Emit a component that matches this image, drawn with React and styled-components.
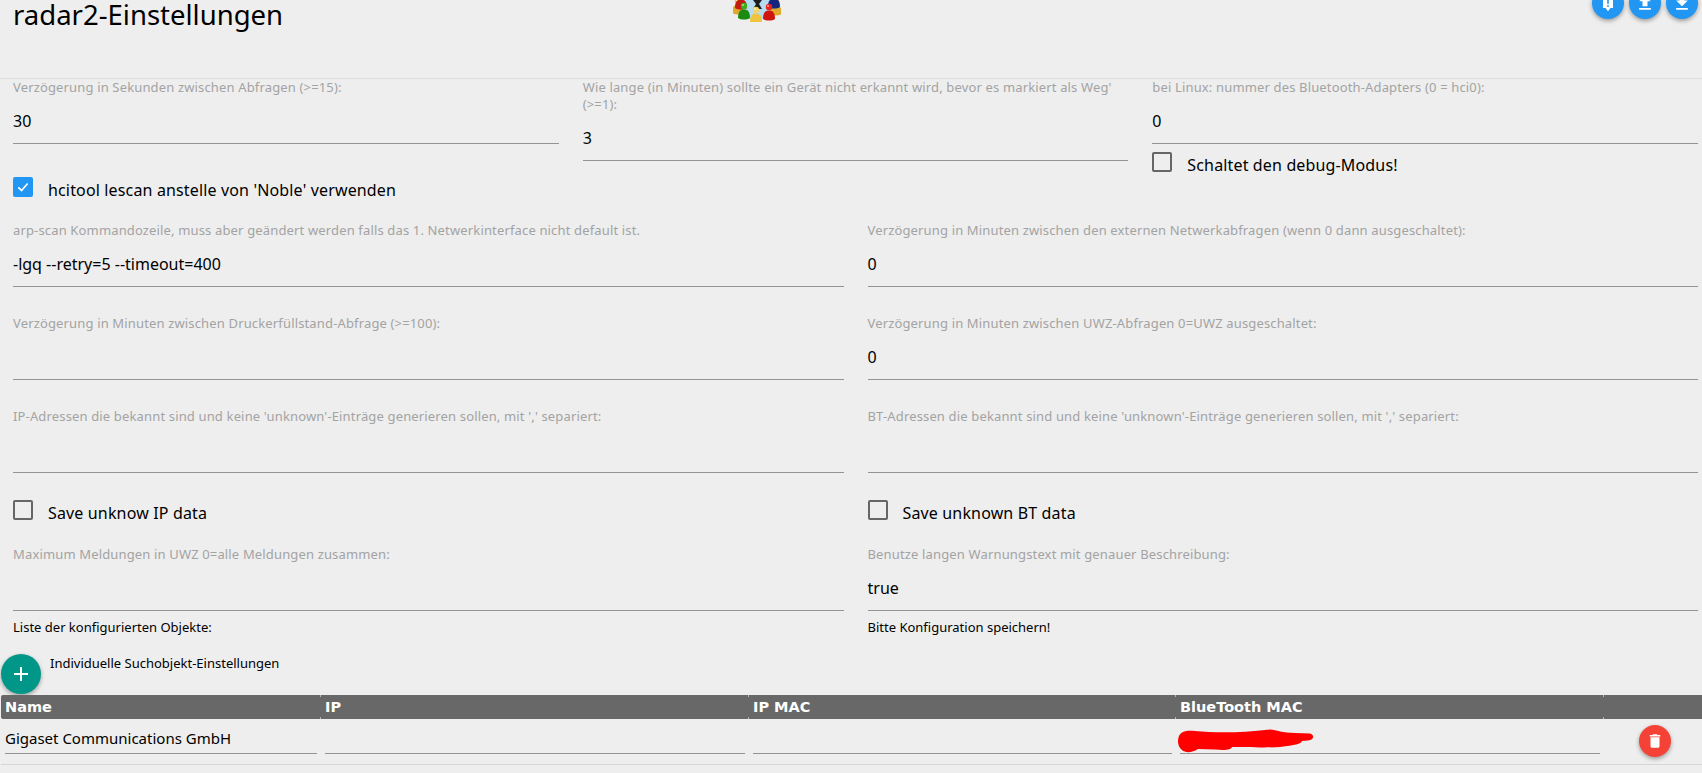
import React from "react";
import styled, { createGlobalStyle } from "styled-components";

const GlobalStyle = createGlobalStyle`
  html, body {
    margin: 0;
    padding: 0;
    height: 773px;
    overflow: hidden;
    background: #eeeeee;
  }
  * {
    box-sizing: border-box;
  }
  body {
    font-family: "Noto Sans", "Open Sans", sans-serif;
    color: #000;
  }
`;

const Header = styled.header`
  display: flex;
  height: 79px;
  padding: 0 4px 0 13px;
  border-bottom: 1px solid #dddddd;
`;

const Title = styled.h1`
  flex: 0 0 720px;
  margin: 0;
  font-size: 27.5px;
  font-weight: 400;
  line-height: 30px;
`;

const Logo = styled.svg`
  display: block;
  width: 48px;
  height: 22px;
`;

const HeadActions = styled.div`
  display: flex;
  gap: 5px;
  margin-left: auto;
  margin-top: -13px;
  align-self: flex-start;
`;

const Fab = styled.button`
  display: flex;
  align-items: center;
  justify-content: center;
  flex: none;
  width: ${(p) => p.$size || 32}px;
  height: ${(p) => p.$size || 32}px;
  padding: 0;
  border: 0;
  border-radius: 50%;
  color: #fff;
  background: ${(p) => p.$bg || "#2196f3"};
  box-shadow: 0 2px 4px rgba(0, 0, 0, 0.35);
`;

const Body = styled.main`
  padding: 0 4px 0 13px;
`;

const Row = styled.div`
  display: grid;
  grid-template-columns: repeat(${(p) => p.$cols || 2}, 1fr);
  column-gap: 24px;
  margin-top: ${(p) => p.$mt || 0}px;
  margin-bottom: ${(p) => p.$mb || 0}px;
`;

const Label = styled.label`
  display: block;
  font-size: 13px;
  letter-spacing: 0.15px;
  line-height: 17px;
  color: #a3a3a3;
`;

const Input = styled.div`
  display: flex;
  align-items: center;
  height: 48px;
  padding-top: 2px;
  font-size: 16px;
  border-bottom: 1px solid #949494;
`;

const Check = styled.div`
  display: flex;
  height: 20px;
  margin-top: ${(p) => p.$mt || 0}px;
  font-size: 16px;
  letter-spacing: 0.15px;
`;

const Box = styled.span`
  display: flex;
  align-items: center;
  justify-content: center;
  flex: none;
  width: 20px;
  height: 20px;
  margin-right: 15px;
  border: 2px solid #666666;
  border-radius: 2px;
  background: ${(p) => (p.$on ? "#2196f3" : "transparent")};
  border-color: ${(p) => (p.$on ? "#2196f3" : "#666666")};
`;

const CheckText = styled.span`
  line-height: 20px;
  margin-top: 3px;
`;

const Note = styled.div`
  font-size: 13px;
  line-height: 17px;
`;

const AddRow = styled.div`
  display: flex;
  padding-left: 1px;
  height: 40px;
`;

const AddText = styled.div`
  margin: 1px 0 0 9px;
  font-size: 13px;
  line-height: 17px;
`;

const Table = styled.div`
  margin: 1px 0 0 1px;
  border-bottom: 1px solid #d6d6d6;
`;

const GridRow = styled.div`
  display: grid;
  grid-template-columns: 320px 428px 427px 428px 98px;
`;

const HeadCell = styled.div`
  height: 24px;
  padding-left: 4px;
  font-family: "DejaVu Sans", sans-serif;
  font-size: 14.5px;
  font-weight: 700;
  line-height: 24px;
  color: #fff;
  background:
    linear-gradient(#b5b5b5, #b5b5b5) right top / 1px 2px no-repeat,
    linear-gradient(#b5b5b5, #b5b5b5) right bottom / 1px 2px no-repeat,
    #686868;

  &:first-child {
    border-radius: 2px 0 0 2px;
  }
  &:last-child {
    background: #686868;
  }
`;

const Cell = styled.div`
  position: relative;
  display: flex;
  justify-content: ${(p) => (p.$center ? "center" : "flex-start")};
  height: 45px;
  padding: ${(p) => (p.$center ? "6px 0 0 4px" : "0 4px")};
`;

const CellInput = styled.div`
  width: 100%;
  height: 35px;
  padding-top: 7px;
  font-size: 15px;
  line-height: 24px;
  border-bottom: 1px solid #949494;
`;

const Scribble = styled.svg`
  position: absolute;
  left: -6px;
  top: 3px;
  width: 160px;
  height: 40px;
`;

function Field({ label, value }) {
  return (
    <div>
      <Label>{label}</Label>
      <Input>{value}</Input>
    </div>
  );
}

function Person({ x, y, c, d }) {
  return (
    <g>
      <path d={`M${x - 6} ${y + 12}c0-6 2-8.500 6-8.500s6 2.500 6 8.500c-3 2-9 2-12 0z`} fill={d} />
      <circle cx={x} cy={y} r={3.2} fill={c} />
      <circle cx={x - 1} cy={y - 1} r={1} fill="#fff" opacity="0.6" />
    </g>
  );
}

function TeamLogo() {
  return (
    <Logo viewBox="0 0 48 22">
      <ellipse cx="23.500" cy="4" rx="21.500" ry="15.500" fill="#b5dcf0" />
      <path d="M20 0h9l-3 4 3 5h-9l3-5z" fill="#1c1c1c" />
      <Person x={5} y={1} c="#edc14a" d="#dfa92c" />
      <Person x={43} y={2} c="#edc14a" d="#dfa92c" />
      <Person x={8} y={-4} c="#dc2417" d="#c21c11" />
      <Person x={41} y={-5} c="#1c2f9c" d="#16257e" />
      <Person x={11} y={6} c="#3cae1c" d="#1b8a10" />
      <Person x={36} y={7} c="#e8231a" d="#d0150f" />
      <Person x={23} y={10} c="#f2d36a" d="#efc53f" />
    </Logo>
  );
}

export default function App() {
  return (
    <>
      <GlobalStyle />
      <Header>
        <Title>radar2-Einstellungen</Title>
        <TeamLogo />
        <HeadActions>
          <Fab>
            <svg width="20" height="20" viewBox="0 0 24 24" fill="currentColor">
              <path d="M6 2h12v16l-3 0-3 4-3-4H6zM11 6v7h2V6zM11 14.500v2h2v-2z" fillRule="evenodd" />
            </svg>
          </Fab>
          <Fab>
            <svg width="20" height="20" viewBox="0 0 24 24" fill="currentColor">
              <path d="M9 16h6v-6h4l-7-7-7 7h4zM5 18h14v2H5z" />
            </svg>
          </Fab>
          <Fab>
            <svg width="20" height="20" viewBox="0 0 24 24" fill="currentColor">
              <path d="M19 9h-4V3H9v6H5l7 7zM5 18v2h14v-2z" />
            </svg>
          </Fab>
        </HeadActions>
      </Header>
      <Body>
        <Row $cols={3}>
          <Field label="Verzögerung in Sekunden zwischen Abfragen (>=15):" value="30" />
          <Field
            label="Wie lange (in Minuten) sollte ein Gerät nicht erkannt wird, bevor es markiert als Weg' (>=1):"
            value="3"
          />
          <div>
            <Field label="bei Linux: nummer des Bluetooth-Adapters (0 = hci0):" value="0" />
            <Check $mt={8}>
              <Box />
              <CheckText>Schaltet den debug-Modus!</CheckText>
            </Check>
          </div>
        </Row>
        <Check $mt={5}>
          <Box $on>
            <svg width="14" height="14" viewBox="0 0 24 24" fill="none" stroke="#fff" strokeWidth="3">
              <path d="M4 12.500l5.500 5.500L20 6" />
            </svg>
          </Box>
          <CheckText>hcitool lescan anstelle von 'Noble' verwenden</CheckText>
        </Check>
        <Row $mt={25} $mb={28}>
          <Field label="arp-scan Kommandozeile, muss aber geändert werden falls das 1. Netwerkinterface nicht default ist." value="-lgq --retry=5 --timeout=400" />
          <Field label="Verzögerung in Minuten zwischen den externen Netwerkabfragen (wenn 0 dann ausgeschaltet):" value="0" />
        </Row>
        <Row $mb={28}>
          <Field label="Verzögerung in Minuten zwischen Druckerfüllstand-Abfrage (>=100):" value="" />
          <Field label="Verzögerung in Minuten zwischen UWZ-Abfragen 0=UWZ ausgeschaltet:" value="0" />
        </Row>
        <Row $mb={27}>
          <Field label="IP-Adressen die bekannt sind und keine 'unknown'-Einträge generieren sollen, mit ',' separiert:" value="" />
          <Field label="BT-Adressen die bekannt sind und keine 'unknown'-Einträge generieren sollen, mit ',' separiert:" value="" />
        </Row>
        <Row $mb={26}>
          <Check>
            <Box />
            <CheckText>Save unknow IP data</CheckText>
          </Check>
          <Check>
            <Box />
            <CheckText>Save unknown BT data</CheckText>
          </Check>
        </Row>
        <Row $mb={8}>
          <Field label="Maximum Meldungen in UWZ 0=alle Meldungen zusammen:" value="" />
          <Field label="Benutze langen Warnungstext mit genauer Beschreibung:" value="true" />
        </Row>
        <Row $mb={18}>
          <Note>Liste der konfigurierten Objekte:</Note>
          <Note>Bitte Konfiguration speichern!</Note>
        </Row>
      </Body>
      <AddRow>
        <Fab $size={40} $bg="#009688">
          <svg width="24" height="24" viewBox="0 0 24 24" fill="currentColor">
            <path d="M19 13h-6v6h-2v-6H5v-2h6V5h2v6h6z" />
          </svg>
        </Fab>
        <AddText>Individuelle Suchobjekt-Einstellungen</AddText>
      </AddRow>
      <Table>
        <GridRow>
          <HeadCell>Name</HeadCell>
          <HeadCell>IP</HeadCell>
          <HeadCell>IP MAC</HeadCell>
          <HeadCell>BlueTooth MAC</HeadCell>
          <HeadCell />
        </GridRow>
        <GridRow>
          <Cell>
            <CellInput>Gigaset Communications GmbH</CellInput>
          </Cell>
          <Cell>
            <CellInput />
          </Cell>
          <Cell>
            <CellInput />
          </Cell>
          <Cell>
            <CellInput />
            <Scribble viewBox="0 0 160 40">
              <path
                d="M9 14C11 9 17 8 25 9C45 11 70 11 100 7.500C107 8 112 11 125 11L140 11.500C145 13 144 18 138 18.500L132 19C131 22 125 23 110 25C95 26 75 25 62 25C61 28 55 28.500 45 27.500L28 27C22 31 15 31 12 28C8 25 7 19 9 14z"
                fill="#ff0000"
              />
            </Scribble>
          </Cell>
          <Cell $center>
            <Fab $bg="#f44336">
              <svg width="18" height="18" viewBox="0 0 24 24" fill="currentColor">
                <path d="M6 19c0 1.100.9 2 2 2h8c1.100 0 2-.9 2-2V7H6zM19 4h-3.500l-1-1h-5l-1 1H5v2h14z" />
              </svg>
            </Fab>
          </Cell>
        </GridRow>
      </Table>
    </>
  );
}
